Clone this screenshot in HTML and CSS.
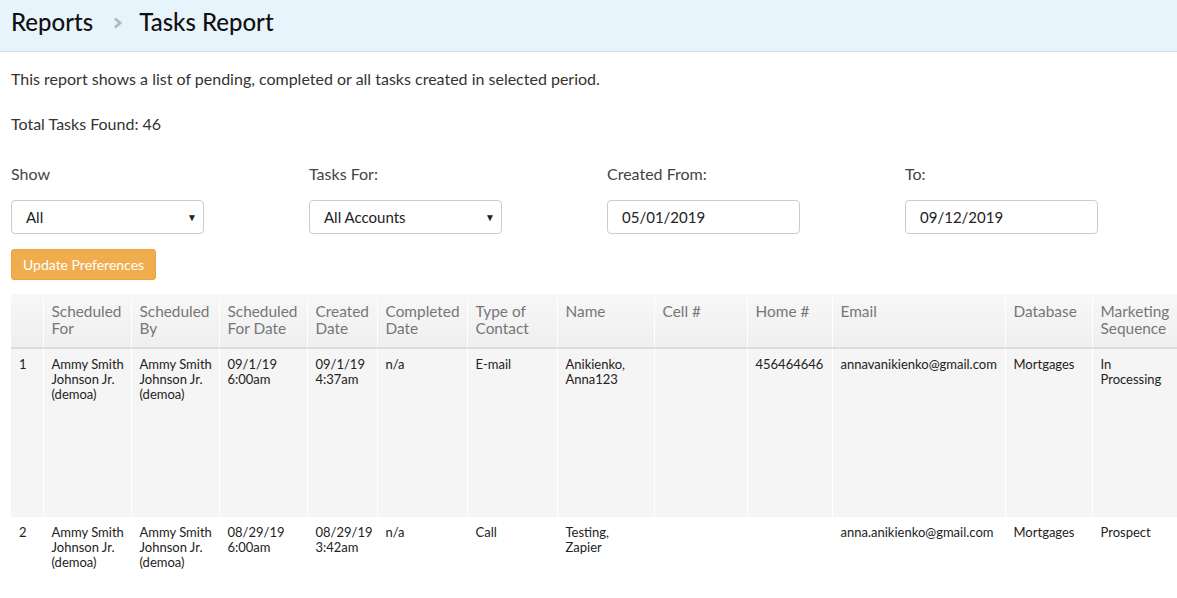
FILE: index.html
```html
<!DOCTYPE html>
<html lang="en">
<head>
  <meta charset="UTF-8">
  <title>Tasks Report</title>
  <link rel="stylesheet" href="styles.css">
</head>
<body>
  <div class="page-header">
    <h1 class="crumbs">
      <span>Reports</span>
      <svg class="crumb-sep" width="10" height="12" viewBox="0 0 10 12"><path d="M2 1.5 L7 6 L2 10.5" fill="none" stroke="#b5b9bd" stroke-width="3"/></svg>
      <span>Tasks Report</span>
    </h1>
  </div>

  <div class="content">
    <p class="intro">This report shows a list of pending, completed or all tasks created in selected period.</p>
    <p class="total">Total Tasks Found: 46</p>

    <div class="filters">
      <div class="filter">
        <label>Show</label>
        <div class="select-box"><span>All</span><span class="caret">▼</span></div>
      </div>
      <div class="filter">
        <label>Tasks For:</label>
        <div class="select-box"><span>All Accounts</span><span class="caret">▼</span></div>
      </div>
      <div class="filter">
        <label>Created From:</label>
        <div class="select-box">05/01/2019</div>
      </div>
      <div class="filter">
        <label>To:</label>
        <div class="select-box">09/12/2019</div>
      </div>
    </div>

    <button class="btn-update">Update Preferences</button>

    <table class="tasks">
      <thead>
        <tr>
          <th class="c-num"></th>
          <th class="c-for">Scheduled For</th>
          <th class="c-by">Scheduled By</th>
          <th class="c-date">Scheduled For Date</th>
          <th class="c-created">Created Date</th>
          <th class="c-done">Completed Date</th>
          <th class="c-type">Type of Contact</th>
          <th class="c-name">Name</th>
          <th class="c-cell">Cell #</th>
          <th class="c-home">Home #</th>
          <th class="c-email">Email</th>
          <th class="c-db">Database</th>
          <th class="c-seq">Marketing Sequence</th>
        </tr>
      </thead>
      <tbody>
        <tr class="tall">
          <td>1</td>
          <td>Ammy Smith<br>Johnson Jr.<br>(demoa)</td>
          <td>Ammy Smith<br>Johnson Jr.<br>(demoa)</td>
          <td>09/1/19<br>6:00am</td>
          <td>09/1/19<br>4:37am</td>
          <td>n/a</td>
          <td>E-mail</td>
          <td>Anikienko,<br>Anna123</td>
          <td></td>
          <td>456464646</td>
          <td>annavanikienko@gmail.com</td>
          <td>Mortgages</td>
          <td>In<br>Processing</td>
        </tr>
        <tr>
          <td>2</td>
          <td>Ammy Smith<br>Johnson Jr.<br>(demoa)</td>
          <td>Ammy Smith<br>Johnson Jr.<br>(demoa)</td>
          <td>08/29/19<br>6:00am</td>
          <td>08/29/19<br>3:42am</td>
          <td>n/a</td>
          <td>Call</td>
          <td>Testing,<br>Zapier</td>
          <td></td>
          <td></td>
          <td>anna.anikienko@gmail.com</td>
          <td>Mortgages</td>
          <td>Prospect</td>
        </tr>
      </tbody>
    </table>
  </div>
</body>
</html>
```

FILE: styles.css
```css
body {
  margin: 0;
  font-family: Lato, 'Liberation Sans', sans-serif;
  color: #333;
  background: #fff;
  overflow: hidden;
}
.page-header {
  background: #e8f4fc;
  border-bottom: 1px solid #d9dee2;
  height: 52px;
  box-sizing: border-box;
  padding: 8px 11px 0;
}
.crumbs {
  margin: 0;
  font-size: 24px;
  line-height: 28px;
  font-weight: 500;
  color: #111;
  display: flex;
  align-items: center;
}
.crumb-sep {
  margin: 1px 16px 0 20px;
}
.content {
  padding: 0 0 0 11px;
}
.intro {
  margin: 17px 0 0;
  font-size: 16px;
  line-height: 20px;
}
.total {
  margin: 25px 0 0;
  font-size: 16px;
  line-height: 20px;
}
.filters {
  display: flex;
  margin-top: 30px;
}
.filter {
  width: 298px;
  flex: none;
}
.filter label {
  display: block;
  font-size: 16px;
  line-height: 20px;
  color: #444;
}
.select-box {
  margin-top: 16px;
  width: 193px;
  height: 34px;
  box-sizing: border-box;
  border: 1px solid #ccc;
  border-radius: 4px;
  padding: 0 6px 0 14px;
  display: flex;
  align-items: center;
  justify-content: space-between;
  font-size: 15px;
  color: #222;
}
.caret {
  font-size: 10px;
  color: #222;
}
.btn-update {
  margin-top: 15px;
  height: 31px;
  padding: 0 11px;
  background: #f0ad4e;
  border: 1px solid #eea43c;
  border-radius: 3px;
  color: #fff;
  font-family: inherit;
  font-size: 14px;
}
.tasks {
  margin-top: 14px;
  border-collapse: collapse;
  table-layout: fixed;
  width: 1166px;
  font-size: 13px;
}
.tasks th, .tasks td {
  box-sizing: border-box;
}
.tasks th {
  background: linear-gradient(#f7f7f7, #efefef);
  color: #777;
  font-weight: 400;
  font-size: 15.4px;
  line-height: 17px;
  text-align: left;
  vertical-align: top;
  padding: 9px 8px 0;
  height: 54px;
  border-left: 1px solid #fff;
  border-bottom: 2px solid #ddd;
}
.tasks td {
  color: #222;
  line-height: 15px;
  vertical-align: top;
  padding: 8px 4px 0 8px;
  border-left: 1px solid #fff;
}
.tasks tr.tall td {
  background: #f5f5f5;
  height: 169px;
}
.tasks th:first-child, .tasks td:first-child { border-left: none; }
.c-num { width: 32px; }
.c-for, .c-by, .c-date { width: 88px; }
.c-created { width: 70px; }
.c-done, .c-type { width: 90px; }
.c-name { width: 97px; }
.c-cell { width: 93px; }
.c-home { width: 85px; }
.c-email { width: 173px; }
.c-db { width: 87px; }
```
